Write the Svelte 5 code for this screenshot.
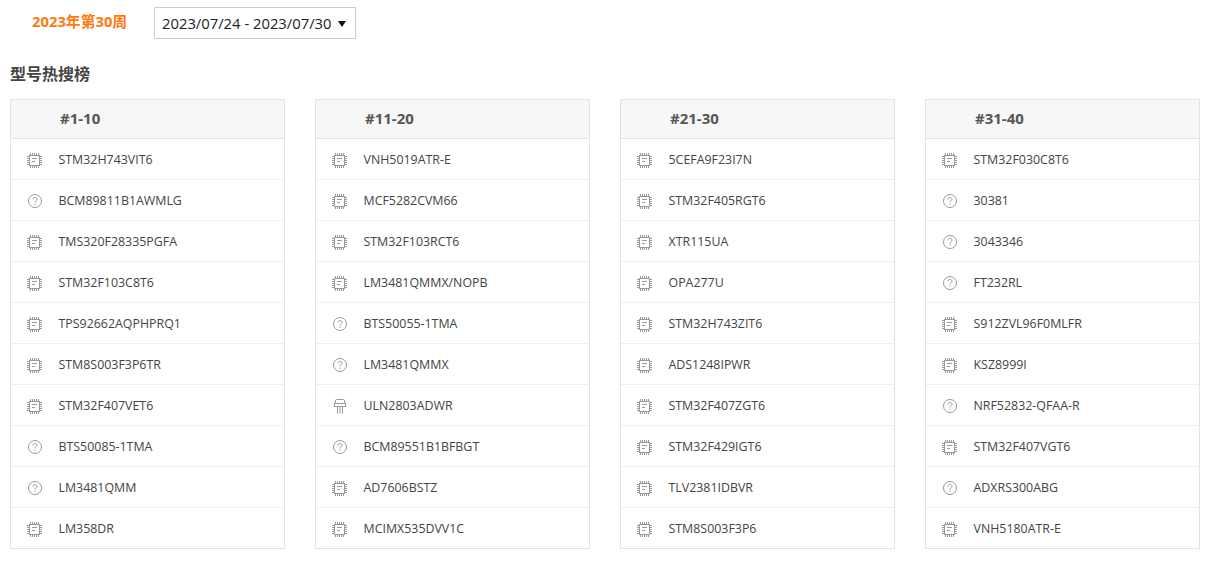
<script>
	const columns = [
		{
			title: "#1-10",
			items: [
				["chip", "STM32H743VIT6"],
				["unknown", "BCM89811B1AWMLG"],
				["chip", "TMS320F28335PGFA"],
				["chip", "STM32F103C8T6"],
				["chip", "TPS92662AQPHPRQ1"],
				["chip", "STM8S003F3P6TR"],
				["chip", "STM32F407VET6"],
				["unknown", "BTS50085-1TMA"],
				["unknown", "LM3481QMM"],
				["chip", "LM358DR"],
			],
		},
		{
			title: "#11-20",
			items: [
				["chip", "VNH5019ATR-E"],
				["chip", "MCF5282CVM66"],
				["chip", "STM32F103RCT6"],
				["chip", "LM3481QMMX/NOPB"],
				["unknown", "BTS50055-1TMA"],
				["unknown", "LM3481QMMX"],
				["transistor", "ULN2803ADWR"],
				["unknown", "BCM89551B1BFBGT"],
				["chip", "AD7606BSTZ"],
				["chip", "MCIMX535DVV1C"],
			],
		},
		{
			title: "#21-30",
			items: [
				["chip", "5CEFA9F23I7N"],
				["chip", "STM32F405RGT6"],
				["chip", "XTR115UA"],
				["chip", "OPA277U"],
				["chip", "STM32H743ZIT6"],
				["chip", "ADS1248IPWR"],
				["chip", "STM32F407ZGT6"],
				["chip", "STM32F429IGT6"],
				["chip", "TLV2381IDBVR"],
				["chip", "STM8S003F3P6"],
			],
		},
		{
			title: "#31-40",
			items: [
				["chip", "STM32F030C8T6"],
				["unknown", "30381"],
				["unknown", "3043346"],
				["unknown", "FT232RL"],
				["chip", "S912ZVL96F0MLFR"],
				["chip", "KSZ8999I"],
				["unknown", "NRF52832-QFAA-R"],
				["chip", "STM32F407VGT6"],
				["unknown", "ADXRS300ABG"],
				["chip", "VNH5180ATR-E"],
			],
		},
	];
</script>

<div class="page">
	<div class="week-bar">
		<span class="week-label">2023年第30周</span>
		<div class="week-select">
			<span>2023/07/24 - 2023/07/30</span>
			<i class="caret"></i>
		</div>
	</div>

	<h2 class="section-title">型号热搜榜</h2>

	<div class="rank-grid">
		{#each columns as col}
			<section class="rank-col">
				<div class="rank-head">{col.title}</div>
				{#each col.items as [kind, name]}
					<div class="rank-row">
						<svg class="part-icon" width="16" height="16" viewBox="0 0 16 16" fill="none" stroke="#999" stroke-width="1">
							{#if kind === "chip"}
								<rect x="2.5" y="3.5" width="10" height="10" />
								<path d="M5 6.5h5M5 9.5h3" />
								<path d="M3.5 1v2M5.5 1v2M7.5 1v2M9.5 1v2M11.5 1v2M3.5 14v2M5.5 14v2M7.5 14v2M9.5 14v2M11.5 14v2" />
								<path d="M0 4.5h2M0 6.5h2M0 8.5h2M0 10.5h2M0 12.5h2M13 4.5h2M13 6.5h2M13 8.5h2M13 10.5h2M13 12.5h2" />
							{:else if kind === "unknown"}
								<circle cx="8" cy="8" r="6.5" />
								<path d="M6 6.4c0-1.2.9-1.9 2-1.9s2 .7 2 1.8c0 1.5-2 1.6-2 3.2" />
								<path d="M8 10.6v1.2" />
							{:else}
								<path d="M3.5 5V2.5c0-.7.5-1 1-1h7c.5 0 1 .3 1 1V5" />
								<rect x="2.5" y="5.5" width="11" height="3" />
								<path d="M5.5 8.5V15.5M8 8.5V15.5M10.5 8.5V15.5" />
							{/if}
						</svg>
						<span class="part-name">{name}</span>
					</div>
				{/each}
			</section>
		{/each}
	</div>
</div>

<style>
	:global(body) {
		background: #fff;
		font-family: "Open Sans", "Noto Sans CJK SC", sans-serif;
	}

	.page {
		padding: 7px 11px 0 10px;
	}

	.week-bar {
		display: flex;
		align-items: center;
		height: 32px;
	}

	.week-label {
		width: 144px;
		padding-left: 22px;
		padding-bottom: 5px;
		box-sizing: border-box;
		color: #ff7a0e;
		font-size: 14.8px;
		font-weight: 700;
		white-space: nowrap;
	}

	.week-select {
		display: flex;
		align-items: center;
		justify-content: space-between;
		box-sizing: border-box;
		width: 202px;
		height: 32px;
		padding: 0 9px 0 7px;
		border: 1px solid #ccc;
		color: #222;
		font-size: 14.8px;
		white-space: nowrap;
	}

	.caret {
		width: 0;
		height: 0;
		border-left: 4px solid transparent;
		border-right: 4px solid transparent;
		border-top: 6px solid #111;
		margin-top: 1px;
	}

	.section-title {
		margin: 24px 0 14px;
		height: 22px;
		line-height: 22px;
		color: #444;
		font-size: 16px;
		font-weight: 700;
	}

	.rank-grid {
		display: grid;
		grid-template-columns: repeat(4, 275px);
		gap: 30px;
	}

	.rank-col {
		border: 1px solid #e3e3e3;
	}

	.rank-head {
		height: 38px;
		line-height: 36px;
		padding-left: 49px;
		background: #f7f7f7;
		border-bottom: 1px solid #e3e3e3;
		color: #555;
		font-size: 15px;
		font-weight: 700;
	}

	.rank-row {
		display: flex;
		align-items: center;
		height: 40px;
		padding-left: 16px;
		border-top: 1px solid #eee;
		color: #444;
		font-size: 12.4px;
	}

	.rank-head + .rank-row {
		border-top: 0;
	}

	.part-icon {
		flex: none;
		margin: 2px 15.5px 0 0;
	}
</style>
